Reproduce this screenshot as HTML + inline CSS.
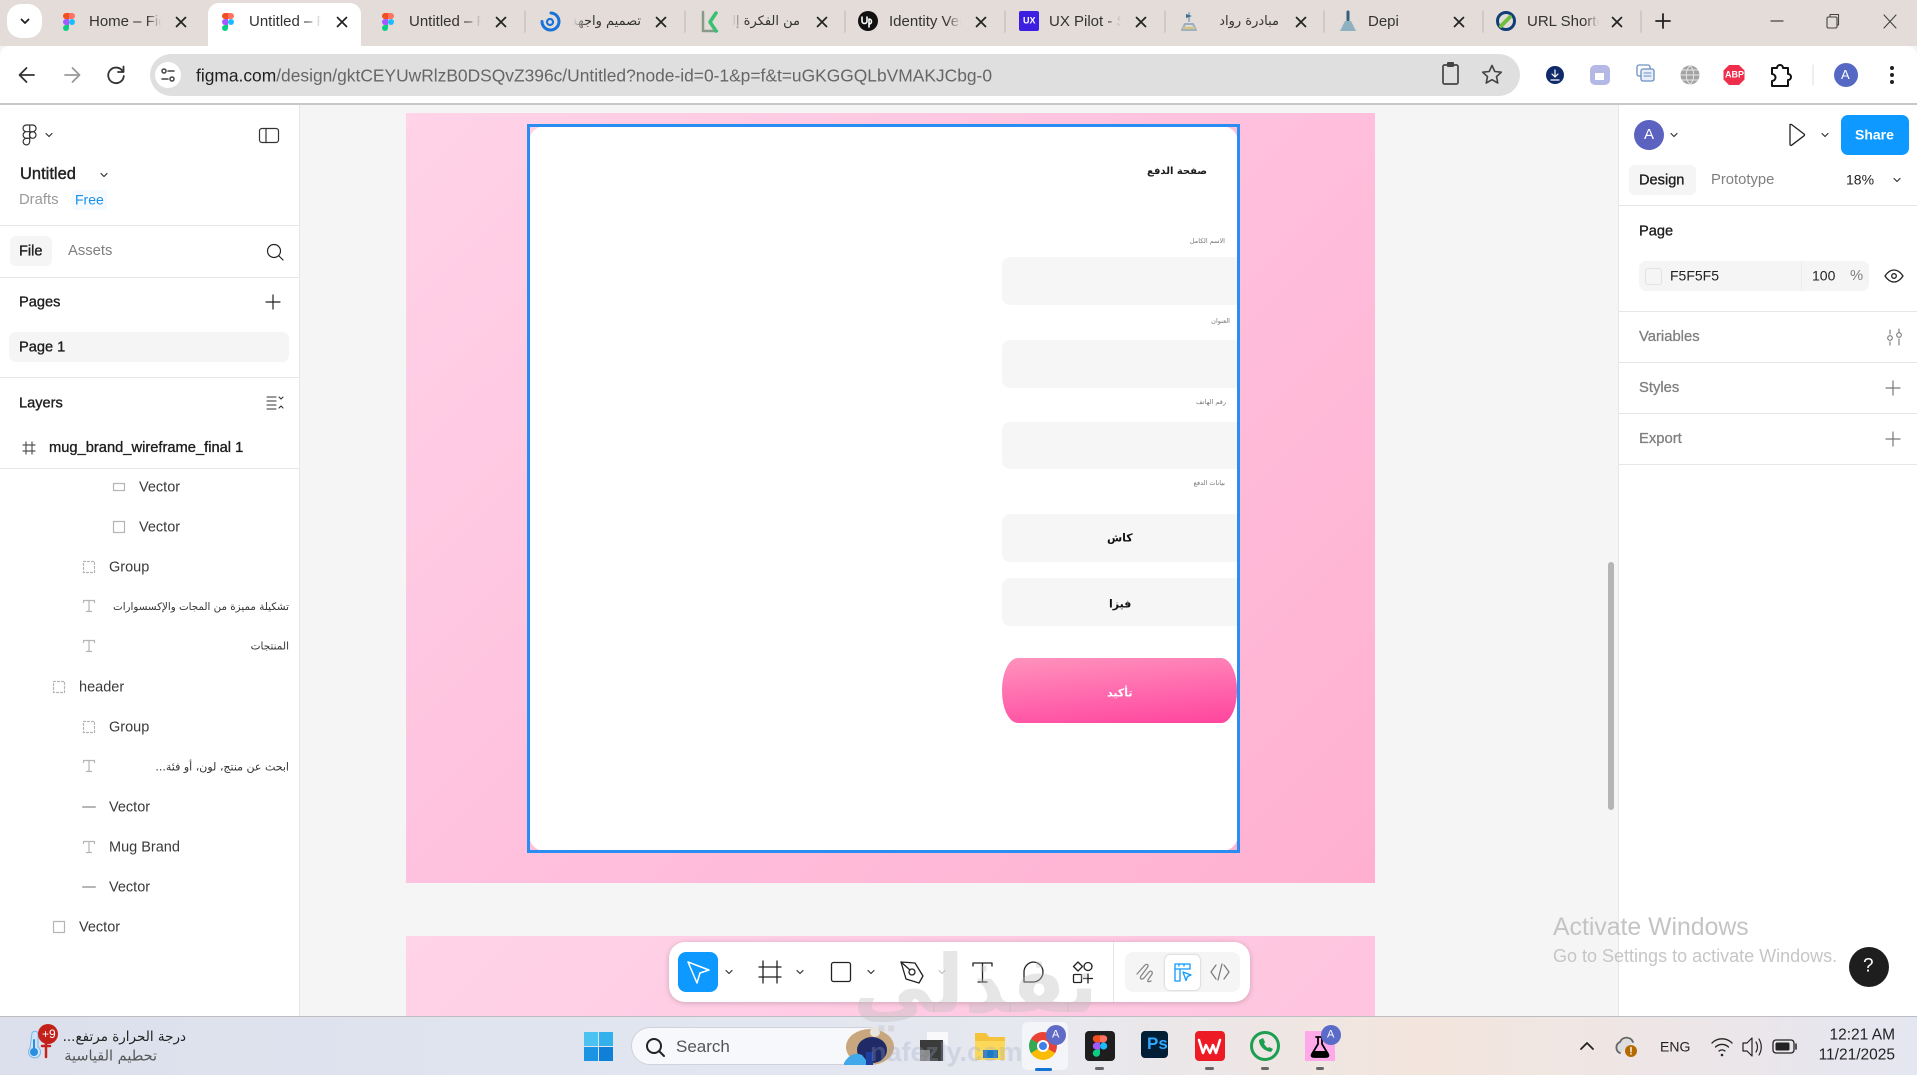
<!DOCTYPE html>
<html><head><meta charset="utf-8"><title>Figma</title>
<style>
*{box-sizing:border-box}
html,body{margin:0;padding:0;width:1917px;height:1075px;overflow:hidden;background:#f5f5f5}
body{position:relative;font-family:"Liberation Sans","DejaVu Sans",sans-serif;color:#222}
.b{position:absolute}
.t{position:absolute;white-space:nowrap;transform:translateY(-50%);line-height:1.2}
.ar{font-family:"DejaVu Sans","Liberation Sans",sans-serif;direction:rtl}
.l{font-size:14.5px;color:#3a3a3a;margin-top:1px}
.m{font-size:14.6px;color:#1e1e1e;-webkit-text-stroke:.35px #1e1e1e;margin-top:1px}
.g{font-size:14.8px;color:#808080;margin-top:1px}
.gm{-webkit-text-stroke:.3px #808080}
.tab{font-size:15px;color:#333;overflow:hidden;-webkit-mask-image:linear-gradient(90deg,#000 80%,transparent);mask-image:linear-gradient(90deg,#000 80%,transparent)}
.d{position:absolute;height:1px;background:#e6e6e6}
svg{position:absolute;left:0;top:0}
</style></head><body>

<!-- chrome -->
<div class="b" style="left:0;top:0;width:1917px;height:46px;background:#e3dcd8"></div>
<div class="b" style="left:0;top:46px;width:1917px;height:58px;background:#fff;border-radius:10px 10px 0 0"></div>
<div class="b" style="left:0;top:103px;width:1917px;height:2px;background:#c8c8c8"></div>
<div class="b" style="left:7px;top:4px;width:35px;height:34px;background:#fff;border-radius:14px"></div>
<div class="b" style="left:208px;top:3px;width:153px;height:44px;background:#fff;border-radius:11px 11px 0 0"></div>
<div class="b" style="left:150px;top:54px;width:1370px;height:42px;background:#dfdfdf;border-radius:21px"></div>
<div class="b" style="left:155px;top:62px;width:26px;height:26px;background:#fff;border-radius:50%"></div>

<!-- canvas -->
<div class="b" style="left:406px;top:113px;width:969px;height:770px;background:linear-gradient(135deg,#ffd3e8,#ffc0dd 50%,#ffb0d0)"></div>
<div class="b" style="left:406px;top:936px;width:969px;height:80px;background:linear-gradient(135deg,#ffd3e8,#ffc4df)"></div>
<div class="b" style="left:529px;top:126px;width:709px;height:725px;background:#fff;border-radius:16px"></div>
<div class="b" style="left:527px;top:124px;width:713px;height:729px;border:3px solid #2a8df2"></div>
<div class="b" style="left:1002px;top:257px;width:235px;height:48px;background:#f6f6f6;border-radius:8px 0 0 8px"></div>
<div class="b" style="left:1002px;top:340px;width:235px;height:48px;background:#f6f6f6;border-radius:8px 0 0 8px"></div>
<div class="b" style="left:1002px;top:422px;width:235px;height:47px;background:#f6f6f6;border-radius:8px 0 0 8px"></div>
<div class="b" style="left:1002px;top:514px;width:235px;height:48px;background:#f6f6f6;border-radius:8px 0 0 8px"></div>
<div class="b" style="left:1002px;top:578px;width:235px;height:48px;background:#f6f6f6;border-radius:8px 0 0 8px"></div>
<div class="b" style="left:1002px;top:658px;width:235px;height:65px;background:linear-gradient(175deg,#ff93bd,#ff449f);border-radius:16px/32px"></div>
<div class="b" style="left:1608px;top:562px;width:6px;height:248px;background:#b5b5b5;border-radius:3px"></div>

<div class="t ar" style="right:710px;top:172px;font-size:10px;font-weight:bold;color:#1a1a1a">صفحة الدفع</div>
<div class="t ar" style="right:692px;top:242px;font-size:6.5px;color:#777">الاسم الكامل</div>
<div class="t ar" style="right:687px;top:322px;font-size:6.5px;color:#777">العنوان</div>
<div class="t ar" style="right:691px;top:403px;font-size:6.5px;color:#777">رقم الهاتف</div>
<div class="t ar" style="right:692px;top:484px;font-size:6.5px;color:#777">بيانات الدفع</div>
<div class="t ar" style="left:1107px;top:538px;font-size:11px;font-weight:bold;color:#111">كاش</div>
<div class="t ar" style="left:1109px;top:604px;font-size:11px;font-weight:bold;color:#111">فيزا</div>
<div class="t ar" style="left:1107px;top:693px;font-size:11px;color:#fff;font-weight:bold">تأكيد</div>

<!-- left panel -->
<div class="b" style="left:0;top:105px;width:300px;height:911px;background:#fff;border-right:1px solid #e6e6e6"></div>
<div class="b" style="left:72px;top:190px;width:35px;height:20px;background:#f4faff;border-radius:4px"></div>
<div class="b" style="left:10px;top:236px;width:42px;height:30px;background:#f5f5f5;border-radius:6px"></div>
<div class="b" style="left:9px;top:332px;width:280px;height:30px;background:#f5f5f5;border-radius:7px"></div>
<div class="d" style="left:0;top:225px;width:299px"></div>
<div class="d" style="left:0;top:277px;width:299px"></div>
<div class="d" style="left:0;top:377px;width:299px"></div>
<div class="d" style="left:0;top:468px;width:299px"></div>

<!-- right panel -->
<div class="b" style="left:1618px;top:105px;width:299px;height:911px;background:#fff;border-left:1px solid #e6e6e6"></div>
<div class="b" style="left:1841px;top:115px;width:68px;height:40px;background:#0d99ff;border-radius:7px"></div>
<div class="b" style="left:1629px;top:165px;width:67px;height:30px;background:#f5f5f5;border-radius:6px"></div>
<div class="b" style="left:1639px;top:261px;width:230px;height:30px;background:#f5f5f5;border-radius:7px"></div>
<div class="b" style="left:1645px;top:268px;width:17px;height:17px;background:#f5f5f5;border:1px solid #e2e2e2;border-radius:3px"></div>
<div class="b" style="left:1801px;top:261px;width:1px;height:30px;background:#ececec"></div>
<div class="d" style="left:1619px;top:205px;width:298px"></div>
<div class="d" style="left:1619px;top:311px;width:298px"></div>
<div class="d" style="left:1619px;top:362px;width:298px"></div>
<div class="d" style="left:1619px;top:413px;width:298px"></div>
<div class="d" style="left:1619px;top:464px;width:298px"></div>
<div class="b" style="left:1849px;top:947px;width:40px;height:40px;background:#1e1e1e;border-radius:50%"></div>

<!-- floating toolbar -->
<div class="b" style="left:669px;top:942px;width:581px;height:60px;background:#fff;border-radius:16px;box-shadow:0 1px 6px rgba(0,0,0,.2)"></div>
<div class="b" style="left:678px;top:952px;width:40px;height:40px;background:#0d99ff;border-radius:8px"></div>
<div class="b" style="left:1113px;top:942px;width:1px;height:60px;background:#e6e6e6"></div>
<div class="b" style="left:1125px;top:952px;width:115px;height:40px;background:#f5f5f5;border-radius:8px"></div>
<div class="b" style="left:1165px;top:955px;width:35px;height:35px;background:#fff;border-radius:5px;box-shadow:0 0 2px rgba(0,0,0,.25)"></div>

<!-- taskbar -->
<div class="b" style="left:0;top:1016px;width:1917px;height:59px;background:linear-gradient(90deg,#dce0ec 0%,#e2e6f0 40%,#e7e8ef 55%,#f3e5dd 74%,#eee6e6 86%,#e4e6f1 100%);border-top:1px solid #bcbcc2"></div>
<div class="b" style="left:631px;top:1027px;width:256px;height:38px;background:rgba(255,255,255,.72);border:1px solid #cfd2da;border-radius:19px"></div>
<div class="b" style="left:1022px;top:1022px;width:46px;height:48px;background:rgba(255,255,255,.55);border-radius:5px"></div>
<div class="b" style="left:1029px;top:1032px;width:28px;height:28px;border-radius:50%;background:conic-gradient(#ea4335 0 120deg,#fbbc05 120deg 240deg,#34a853 240deg 300deg,#ea4335 300deg)"></div>
<div class="b" style="left:1037px;top:1040px;width:12px;height:12px;border-radius:50%;background:#3f7fe8;border:2px solid #fff"></div>
<div class="b" style="left:1035px;top:1068px;width:17px;height:3px;background:#1474d4;border-radius:2px"></div>
<div class="b" style="left:1085px;top:1031px;width:30px;height:30px;background:#1e1e1e;border-radius:4px"></div>
<div class="b" style="left:1141px;top:1031px;width:27px;height:27px;background:#001e36;border-radius:4px"></div>
<div class="b" style="left:1195px;top:1031px;width:30px;height:30px;background:#ed1c24;border-radius:4px"></div>
<div class="b" style="left:1305px;top:1031px;width:30px;height:30px;background:#ffa9ea"></div>

<svg width="1917" height="1075" viewBox="0 0 1917 1075" fill="none" stroke-linecap="round" stroke-linejoin="round">
<defs>
<g id="fig" stroke="none"><path fill="#f24e1e" d="M-4-12h4v8h-4a4 4 0 0 1 0-8z"/><path fill="#ff7262" d="M0-12h4a4 4 0 0 1 0 8H0z"/><path fill="#a259ff" d="M-4-4h4v8h-4a4 4 0 0 1 0-8z"/><circle fill="#1abcfe" cx="4" cy="0" r="4"/><path fill="#0acf83" d="M-4 4h4v4a4 4 0 1 1-4-4z"/></g>
<path id="x" d="M-4.5-4.5l9 9m0-9l-9 9" stroke="#222" stroke-width="1.7"/>
<path id="ch" d="M-3-1.5l3 3 3-3" stroke="#333" stroke-width="1.2"/>
<path id="pl" d="M-7 0h14M0-7v14" stroke-width="1.2"/>
</defs>

<!-- tab strip -->
<path d="M21.5 19.5l3.5 3.5 3.5-3.5" stroke="#222" stroke-width="1.8"/>
<use href="#fig" transform="translate(69,22) scale(.75)"/><use href="#x" x="181" y="22"/>
<use href="#fig" transform="translate(228,22) scale(.75)"/><use href="#x" x="342" y="22"/>
<use href="#fig" transform="translate(388,22) scale(.75)"/><use href="#x" x="501" y="22"/>
<use href="#x" x="661" y="22"/><use href="#x" x="822" y="22"/><use href="#x" x="981" y="22"/><use href="#x" x="1141" y="22"/><use href="#x" x="1301" y="22"/><use href="#x" x="1459" y="22"/><use href="#x" x="1617" y="22"/>
<g stroke="#c9c3c0" stroke-width="1.5"><path d="M525 11v21M685 11v21M845 11v21M1005 11v21M1165 11v21M1324 11v21M1483 11v21M1641 11v21"/></g>
<path d="M551 13a8.500 8.500 0 0 1-1 17 8.500 8.500 0 0 1-8-8.500" stroke="#1a73d8" stroke-width="3"/><circle cx="550" cy="22" r="3" stroke="#1a73d8" stroke-width="2.200"/>
<path d="M703 12v19h14" stroke="#8a9a8a" stroke-width="2.500"/><path d="M716 13l-6 9 6 9" stroke="#38c172" stroke-width="3.500"/>
<circle cx="868" cy="21" r="10" fill="#111"/><path d="M862 17v4a2.500 2.500 0 0 0 5 0v-4M869 27v-8a2.500 2.500 0 1 1 0 5" stroke="#fff" stroke-width="1.600"/>
<rect x="1019" y="11" width="20" height="20" rx="2" fill="#3c1fe0"/>
<path d="M1189 13v8M1182 30h14l-3-6h-8z" stroke="#9ab0c0" stroke-width="2"/><path d="M1186 14l6 2-6 2z" fill="#3a6e8a"/><path d="M1184 28h10" stroke="#d4c48a" stroke-width="2.500"/>
<path d="M1348 12v8" stroke="#35607d" stroke-width="3"/><path d="M1340 31l5-10h6l5 10z" fill="#8fb0c0"/>
<circle cx="1506" cy="21" r="8.500" stroke="#123e78" stroke-width="3"/><path d="M1501 26l9-9" stroke="#6fbf3e" stroke-width="4"/>
<path d="M1656 21h14M1663 14v14" stroke="#222" stroke-width="1.800"/>
<path d="M1771 21h12" stroke="#444" stroke-width="1.200"/>
<rect x="1827" y="17" width="10" height="11" rx="1.500" stroke="#444" stroke-width="1.100"/><path d="M1830 17v-2.500h8.500v10.500H1837" stroke="#444" stroke-width="1.100"/>
<path d="M1884 15l12 13m0-13l-12 13" stroke="#444" stroke-width="1.100"/>

<!-- nav -->
<path d="M34 75H20m6.500-7l-7 7 7 7" stroke="#333" stroke-width="1.800"/>
<path d="M65 75h14m-6.500-7l7 7-7 7" stroke="#9a9a9a" stroke-width="1.800"/>
<path d="M122.500 71a7.800 7.800 0 1 0 1.300 5" stroke="#333" stroke-width="1.800"/><path d="M123.500 66.500v5.500h-5.500" stroke="#333" stroke-width="1.800"/>
<g stroke="#444" stroke-width="1.500"><circle cx="164" cy="71" r="2"/><path d="M168 71h6M162 79h6"/><circle cx="172" cy="79" r="2"/></g>
<rect x="1443" y="65" width="15" height="19" rx="1.500" stroke="#444" stroke-width="1.700"/><rect x="1447" y="62" width="7" height="5" rx="1" fill="#444"/>
<path d="M1492 65.500l2.800 6 6.500.7-4.800 4.400 1.300 6.400-5.800-3.300-5.800 3.300 1.300-6.400-4.800-4.400 6.500-.7z" stroke="#444" stroke-width="1.600"/>
<circle cx="1555" cy="75" r="9" fill="#0f2a6b"/><path d="M1555 70v7m-3-3l3 3 3-3M1551 80h8" stroke="#fff" stroke-width="1.200"/>
<rect x="1590" y="65" width="20" height="20" rx="5" fill="#b4b8e4"/><rect x="1595" y="73" width="9" height="7" fill="#fff"/>
<rect x="1637" y="65" width="13" height="11" rx="2" stroke="#6c8fc0" stroke-width="1.300"/><rect x="1641" y="69" width="13" height="12" rx="2" fill="#e9eefb" stroke="#6c8fc0" stroke-width="1.300"/><path d="M1644 73h7M1644 76h7" stroke="#6c8fc0"/>
<circle cx="1690" cy="75" r="9.500" fill="#a3a3a3"/><path d="M1680.500 75h19M1690 65.500c-5 5-5 14 0 19M1690 65.500c5 5 5 14 0 19M1682 70h16M1682 80h16" stroke="#e8e8e8" stroke-width=".9"/>
<path d="M1729 65h10l5.500 5.500v9l-5.500 5.500h-10l-5.500-5.500v-9z" fill="#ee2e4a"/>
<path d="M1772 68h5a3 3 0 0 1 6 0h5v6a3 3 0 0 1 0 6v6h-16v-5a3 3 0 0 0 0-7z" stroke="#111" stroke-width="2"/>
<path d="M1813 65v20" stroke="#ddd"/>
<circle cx="1846" cy="75" r="12" fill="#5468c4"/>
<g fill="#222" stroke="none"><circle cx="1892" cy="68" r="2"/><circle cx="1892" cy="75" r="2"/><circle cx="1892" cy="82" r="2"/></g>

<!-- left panel icons -->
<g stroke="#333" stroke-width="1.200"><path d="M29.700 125h-3.300a3.300 3.300 0 0 0 0 6.700h3.300zM29.700 125h3a3.300 3.300 0 0 1 0 6.700h-3zM29.700 131.700h-3.300a3.300 3.300 0 0 0 0 6.600h3.300z"/><circle cx="32.700" cy="135" r="3.300"/><path d="M26.400 138.300h3.300v3.300a3.300 3.300 0 1 1-3.300-3.300z"/></g>
<use href="#ch" x="49" y="135"/><use href="#ch" x="104" y="175"/>
<rect x="259.500" y="128.500" width="19" height="14" rx="2.500" stroke="#333" stroke-width="1.200"/><path d="M266 128.500v14" stroke="#333" stroke-width="1.200"/>
<circle cx="274" cy="251" r="6.500" stroke="#222" stroke-width="1.200"/><path d="M279 256l4 4" stroke="#222" stroke-width="1.200"/>
<use href="#pl" x="273" y="302" stroke="#222"/>
<path d="M267 397h9M267 401h9M267 405h9M267 409h9M279 397l2 2 2-2M279 408l2-2 2 2" stroke="#333" stroke-width="1.100"/>
<path d="M23 445h12M23 451h12M26 442v12M32 442v12" stroke="#555" stroke-width="1.200"/>
<g stroke="#b5b5b5" stroke-width="1.200">
<rect x="113.500" y="483.500" width="11" height="7"/>
<rect x="113.500" y="521.500" width="11" height="11"/>
<rect x="83.500" y="561.500" width="11" height="11" stroke-dasharray="2 2"/>
<path d="M83.500 600.500h11M89 600.500v11M86.500 611.500h5M83.500 600.500v2M94.500 600.500v2"/>
<path d="M83.500 640.500h11M89 640.500v11M86.500 651.500h5M83.500 640.500v2M94.500 640.500v2"/>
<rect x="53.500" y="681.500" width="11" height="11" stroke-dasharray="2 2"/>
<rect x="83.500" y="721.500" width="11" height="11" stroke-dasharray="2 2"/>
<path d="M83.500 760.500h11M89 760.500v11M86.500 771.500h5M83.500 760.500v2M94.500 760.500v2"/>
<path d="M83 807h12" stroke-width="2"/>
<path d="M83.500 841.500h11M89 841.500v11M86.500 852.500h5M83.500 841.500v2M94.500 841.500v2"/>
<path d="M83 887h12" stroke-width="2"/>
<rect x="53.500" y="921.500" width="11" height="11"/>
</g>

<!-- right panel icons -->
<use href="#ch" x="1674" y="135"/><use href="#ch" x="1825" y="135"/><use href="#ch" x="1897" y="180"/>
<path d="M1790 125v20a1 1 0 0 0 1.500.8l12.500-9.500a1 1 0 0 0 0-1.800l-12.500-9.500a1 1 0 0 0-1.500.8z" transform="translate(0,-.5)" stroke="#222" stroke-width="1.300"/>
<path d="M1885 276c3-4.500 6-6 9-6s6 1.500 9 6c-3 4.500-6 6-9 6s-6-1.500-9-6z" stroke="#222" stroke-width="1.300"/><circle cx="1894" cy="276" r="2.300" stroke="#222" stroke-width="1.300"/>
<g stroke="#777" stroke-width="1.100"><path d="M1890 330v4M1890 342v3M1899 329v3M1899 339v6"/><circle cx="1890" cy="338" r="2.300"/><circle cx="1899" cy="335" r="2.300"/></g>
<use href="#pl" x="1893" y="388" stroke="#777"/><use href="#pl" x="1893" y="439" stroke="#777"/>

<!-- toolbar icons -->
<path d="M688 962l21 8-9 3-3 10z" stroke="#fff" stroke-width="1.500"/>
<use href="#ch" x="729" y="972"/><use href="#ch" x="800" y="972"/><use href="#ch" x="871" y="972"/>
<g opacity=".3"><use href="#ch" x="942" y="972"/></g>
<path d="M763 961v22M777 961v22M759 967h22M759 977h22" stroke="#222" stroke-width="1.300"/>
<rect x="831.500" y="962.500" width="19" height="19" rx="2" stroke="#222" stroke-width="1.300"/>
<path d="M901 962l14 1 8 13-4 7-13-4z" stroke="#222" stroke-width="1.300"/><circle cx="912" cy="972" r="3" stroke="#222" stroke-width="1.300"/><path d="M901 962l9 8" stroke="#222" stroke-width="1.300"/>
<path d="M973 966v-3h19v3M982.500 963v19M978 982h9" stroke="#222" stroke-width="1.300"/>
<path d="M1033 962a10 10 0 1 1 0 20h-9v-10a10 10 0 0 1 9-10z" stroke="#222" stroke-width="1.300"/>
<path d="M1078 962l4.500 4.500-4.500 4.500-4.500-4.500z" stroke="#222" stroke-width="1.300"/><circle cx="1088" cy="966.500" r="4" stroke="#222" stroke-width="1.300"/><rect x="1073.500" y="974.500" width="8" height="8" rx="1" stroke="#222" stroke-width="1.300"/><path d="M1088 974v9M1083.500 978.500h9" stroke="#222" stroke-width="1.300"/>
<path d="M1137 974l8-9c3-2 4 1 2 3l-6 8c-2 3 1 4 3 2l5-6c2-2 4 0 3 2l-4 6c-1 2 1 2 3 1" stroke="#888" stroke-width="1.300"/>
<path d="M1175 964h15v5h-10v12h-5zM1175 969h5M1179 964v2M1184 964v2" stroke="#0d99ff" stroke-width="1.300"/><path d="M1183 972l8 3-3.500 1.500-1.500 4z" stroke="#0d99ff" stroke-width="1.300"/>
<path d="M1216 965l-5 7 5 7M1224 965l5 7-5 7M1222 964l-4 16" stroke="#777" stroke-width="1.200"/>

<!-- taskbar icons -->
<path d="M32 1033a3.500 3.500 0 0 1 6 0v14a6 6 0 1 1-8 1z" fill="#cfe4f6" stroke="#7ab6e6"/><circle cx="34" cy="1052" r="4" fill="#2a8fe0" stroke="none"/><path d="M34 1040v11" stroke="#2a8fe0" stroke-width="2"/>
<path d="M46 1042v15M42 1046h8" stroke="#c7221c" stroke-width="2.500"/><circle cx="48" cy="1034" r="10" fill="#c4201a" stroke="none"/>
<g stroke="none"><rect x="584" y="1032" width="14" height="14" fill="#4cc2f1"/><rect x="599" y="1032" width="14" height="14" fill="#33b1ec"/><rect x="584" y="1047" width="14" height="14" fill="#1b94e4"/><rect x="599" y="1047" width="14" height="14" fill="#0f7fd8"/></g>
<circle cx="654" cy="1046" r="7" stroke="#222" stroke-width="2"/><path d="M659 1051l5 5" stroke="#222" stroke-width="2"/>
<!-- search picture -->
<ellipse cx="870" cy="1047" rx="24" ry="18" fill="#c8a77e" stroke="none"/><ellipse cx="872" cy="1050" rx="15" ry="13" fill="#1f2a66" stroke="none"/><circle cx="875" cy="1032" r="5" fill="#e8e4de" stroke="none"/><path d="M844 1063c5-9 12-11 18-8l8 10h-26z" fill="#41a8ec" stroke="none"/><rect x="866" y="1052" width="7" height="13" fill="#1e3fa0" stroke="none"/>
<rect x="927" y="1032" width="21" height="13" fill="#fff" opacity=".75" stroke="none"/>
<rect x="920" y="1040" width="23" height="21" fill="#3b3b3b" stroke="none"/><path d="M920 1050h10v11h-10z" fill="#8a8a8a" stroke="none"/>
<path d="M975 1033h11l3 4h16v23h-30z" fill="#f5c33b" stroke="none"/><rect x="975" y="1041" width="30" height="19" fill="#fbd85a" stroke="none"/><rect x="983" y="1050" width="15" height="8" fill="#1b78c4" stroke="none"/>
<circle cx="1056" cy="1035" r="10" fill="#5f6bc7" stroke="none"/>
<use href="#fig" transform="translate(1100,1046) scale(.9)"/>
<path d="M1199 1040l4 13 3-8 4 8 3-8 3 8 4-13" stroke="#fff" stroke-width="2.500"/>
<circle cx="1265" cy="1046" r="13.500" stroke="#1d9e50" stroke-width="3"/><path d="M1259 1040c0 6 5 11 12 12l2-3-4-2-1 1c-2-1-3-3-4-4l1-2-2-4z" fill="#1d9e50" stroke="none"/>
<path d="M1316 1037h8M1318 1037v7l-6 10c-1 2 0 3 2 3h12c2 0 3-1 2-3l-6-10v-7" stroke="#000" stroke-width="1.800"/><path d="M1314 1051h12l3 6h-18z" fill="#000" stroke="none"/>
<circle cx="1331" cy="1035" r="10" fill="#5b6cc8" stroke="none"/>
<g fill="#666" stroke="none"><rect x="1095" y="1067" width="9" height="3" rx="1.500"/><rect x="1205" y="1067" width="9" height="3" rx="1.500"/><rect x="1261" y="1067" width="8" height="3" rx="1.500"/><rect x="1316" y="1067" width="8" height="3" rx="1.500"/></g>
<path d="M1581 1049l6-6 6 6" stroke="#222" stroke-width="1.800"/>
<path d="M1620 1053a6 6 0 0 1 0-11 7 7 0 0 1 13 0" stroke="#666" stroke-width="1.800" fill="#ddd"/><circle cx="1631" cy="1051" r="6" fill="#b56a00" stroke="none"/><path d="M1631 1047.500v4M1631 1053.500v.5" stroke="#fff" stroke-width="1.400"/>
<path d="M1712 1043a14 14 0 0 1 20 0M1715.500 1047a9.500 9.500 0 0 1 13 0M1719 1051a4.500 4.500 0 0 1 6 0" stroke="#222" stroke-width="1.300"/><circle cx="1722" cy="1055" r="1.300" fill="#222" stroke="none"/>
<path d="M1743 1043h4l5-5v18l-5-5h-4zM1756 1042c2 3 2 7 0 10M1759 1039c3 5 3 11 0 16" stroke="#222" stroke-width="1.200"/>
<rect x="1773" y="1040" width="21" height="13" rx="3" stroke="#222" stroke-width="1.300"/><rect x="1775.500" y="1042.500" width="14" height="8" rx="1.500" fill="#222" stroke="none"/><path d="M1796 1044v5" stroke="#222" stroke-width="1.500"/>
</svg>

<!-- tab text -->
<div class="t tab" style="left:89px;top:22px;width:72px">Home – Figma</div>
<div class="t tab" style="left:249px;top:22px;width:72px">Untitled – Figma</div>
<div class="t tab" style="left:409px;top:22px;width:72px">Untitled – Figma</div>
<div class="t ar" style="right:1276px;top:22px;font-size:13px;color:#333;width:68px;overflow:hidden;-webkit-mask-image:linear-gradient(270deg,#000 80%,transparent)">تصميم واجهة</div>
<div class="t ar" style="right:1117px;top:22px;font-size:13px;color:#333;width:68px;overflow:hidden;-webkit-mask-image:linear-gradient(270deg,#000 80%,transparent)">من الفكرة إلى</div>
<div class="t tab" style="left:889px;top:22px;width:72px">Identity Verification</div>
<div class="t" style="left:1023px;top:21px;font-size:9px;font-weight:bold;color:#fff">UX</div>
<div class="t tab" style="left:1049px;top:22px;width:72px">UX Pilot - Superfast</div>
<div class="t ar" style="right:638px;top:22px;font-size:13px;color:#333;width:66px;overflow:hidden;-webkit-mask-image:linear-gradient(270deg,#000 85%,transparent)">مبادرة رواد</div>
<div class="t tab" style="left:1368px;top:22px;width:72px">Depi</div>
<div class="t tab" style="left:1527px;top:22px;width:72px">URL Shortener</div>

<!-- URL -->
<div class="t" style="left:196px;top:76px;font-size:17.4px;color:#666"><span style="color:#1f1f1f">figma.com</span>/design/gktCEYUwRlzB0DSQvZ396c/Untitled?node-id=0-1&amp;p=f&amp;t=uGKGGQLbVMAKJCbg-0</div>
<div class="t" style="left:1841px;top:75px;font-size:13px;color:#fff">A</div>
<div class="t" style="left:1725px;top:75px;font-size:9px;font-weight:bold;color:#fff">ABP</div>

<!-- left panel text -->
<div class="t" style="left:20px;top:175px;font-size:16.500px;color:#222;-webkit-text-stroke:.4px #222">Untitled</div>
<div class="t g" style="left:19px;top:200px;color:#999">Drafts</div>
<div class="t" style="left:75px;top:200px;font-size:14px;color:#1b8fe8">Free</div>
<div class="t m" style="left:19px;top:251px">File</div>
<div class="t g" style="left:68px;top:251px">Assets</div>
<div class="t m" style="left:19px;top:302px">Pages</div>
<div class="t m" style="left:19px;top:347px">Page 1</div>
<div class="t m" style="left:19px;top:403px">Layers</div>
<div class="t m" style="left:49px;top:448px;font-size:14.700px">mug_brand_wireframe_final 1</div>
<div class="t l" style="left:139px;top:487px">Vector</div>
<div class="t l" style="left:139px;top:527px">Vector</div>
<div class="t l" style="left:109px;top:567px">Group</div>
<div class="t ar" style="right:1628px;top:607px;font-size:10.300px;color:#333">تشكيلة مميزة من المجات والإكسسوارات</div>
<div class="t ar" style="right:1628px;top:647px;font-size:10.500px;color:#333">المنتجات</div>
<div class="t l" style="left:79px;top:687px">header</div>
<div class="t l" style="left:109px;top:727px">Group</div>
<div class="t ar" style="right:1628px;top:767px;font-size:11px;color:#333">ابحث عن منتج، لون، أو فئة...</div>
<div class="t l" style="left:109px;top:807px">Vector</div>
<div class="t l" style="left:109px;top:847px">Mug Brand</div>
<div class="t l" style="left:109px;top:887px">Vector</div>
<div class="t l" style="left:79px;top:927px">Vector</div>

<!-- right panel text -->
<div class="b" style="left:1634px;top:120px;width:30px;height:30px;background:#5b62c0;border-radius:50%;color:#fff;font-size:15px;line-height:30px;text-align:center">A</div>
<div class="t" style="left:1855px;top:135px;font-size:14px;font-weight:bold;color:#fff">Share</div>
<div class="t m" style="left:1639px;top:180px">Design</div>
<div class="t g" style="left:1711px;top:180px">Prototype</div>
<div class="t" style="left:1846px;top:180px;font-size:14px;color:#222">18%</div>
<div class="t m" style="left:1639px;top:231px">Page</div>
<div class="t" style="left:1670px;top:276px;font-size:14px;color:#222">F5F5F5</div>
<div class="t" style="left:1812px;top:276px;font-size:14px;color:#222">100</div>
<div class="t g" style="left:1850px;top:276px">%</div>
<div class="t g gm" style="left:1639px;top:337px">Variables</div>
<div class="t g gm" style="left:1639px;top:388px">Styles</div>
<div class="t g gm" style="left:1639px;top:439px">Export</div>

<!-- activate windows -->
<div class="t" style="left:1553px;top:928px;font-size:24.800px;color:#c4c4c4">Activate Windows</div>
<div class="t" style="left:1553px;top:957px;font-size:18px;color:#c6c6c6">Go to Settings to activate Windows.</div>
<div class="t" style="left:1863px;top:967px;font-size:19px;color:#fff">?</div>

<!-- taskbar text -->
<div class="t" style="left:42px;top:1034px;font-size:12px;color:#fff">+9</div>
<div class="t ar" style="right:1731px;top:1037px;font-size:13.500px;color:#222">درجة الحرارة مرتفع...</div>
<div class="t ar" style="right:1760px;top:1057px;font-size:14.500px;color:#555">تحطيم القياسية</div>
<div class="t" style="left:676px;top:1047px;font-size:17px;color:#555">Search</div>
<div class="t" style="left:1052px;top:1035px;font-size:11px;color:#fff">A</div>
<div class="t" style="left:1147px;top:1044px;font-size:17px;font-weight:bold;color:#31a8ff">Ps</div>
<div class="t" style="left:1327px;top:1035px;font-size:11px;color:#fff">A</div>
<div class="t" style="left:1660px;top:1047px;font-size:14px;color:#222">ENG</div>
<div class="t" style="right:22px;top:1036px;font-size:15.500px;color:#222">12:21 AM</div>
<div class="t" style="right:22px;top:1056px;font-size:15.500px;color:#222">11/21/2025</div>

<!-- watermark -->
<div class="t ar" style="left:853px;top:985px;font-size:80px;font-weight:bold;color:rgba(190,190,190,.38)">نفذلي</div>
<div class="t" style="left:870px;top:1052px;font-size:27px;font-weight:bold;color:rgba(150,165,195,.28)">nafezly.com</div>

</body></html>
